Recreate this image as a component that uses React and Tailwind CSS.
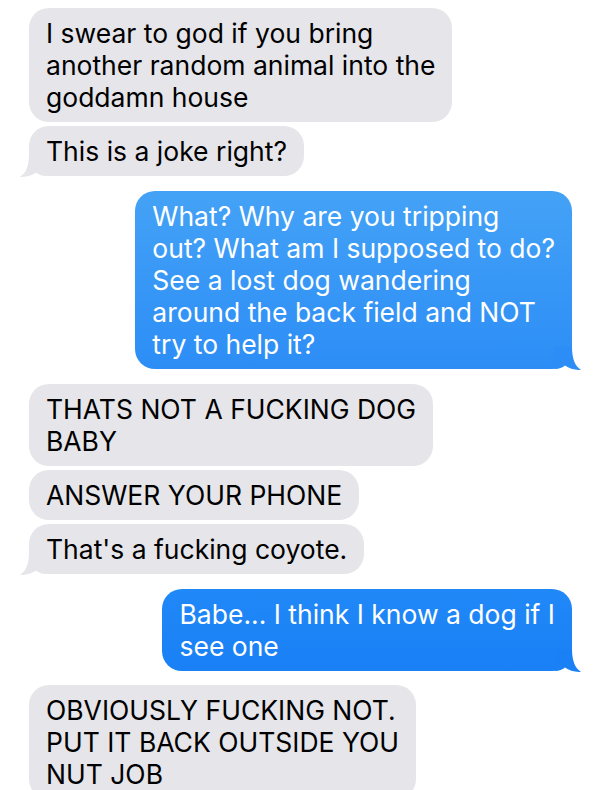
import React from "react";

const GRAY = "#e5e5ea";

function Tail({ side, color }) {
  const pos =
    side === "left"
      ? "left-[-9px] bottom-[-1px]"
      : "right-[-9px] bottom-[-1px] -scale-x-100";
  return (
    <svg
      className={`absolute ${pos}`}
      width="26"
      height="24"
      viewBox="0 0 26 24"
    >
      <path
        d="M9 1 C9 13 6 20 0 24 C6 24.2 12 22.5 16 19.5 C18.5 21.5 22 23 26 23 L26 1 Z"
        fill={color}
      />
    </svg>
  );
}

function Bubble({ side, lines, tail, className = "", tailColor }) {
  const left = side === "left";
  return (
    <div
      className={`relative w-fit rounded-[20px] px-[17px] py-[9px] text-[26.5px] leading-[32px] ${
        left ? "self-start ml-[29px] text-black bg-[#e5e5ea]" : "self-end mr-[28px] text-white"
      } ${className}`}
    >
      {tail && <Tail side={side} color={tailColor || GRAY} />}
      <div className="relative whitespace-nowrap">
        {lines.map((l, i) => (
          <React.Fragment key={i}>
            {l}
            {i < lines.length - 1 && <br />}
          </React.Fragment>
        ))}
      </div>
    </div>
  );
}

export default function App() {
  return (
    <div
      className="w-[600px] h-[790px] overflow-hidden bg-white flex flex-col pt-[8px]"
      style={{ fontFamily: 'Inter, "Liberation Sans", Arial, sans-serif' }}
    >
      <Bubble
        side="left"
        lines={["I swear to god if you bring", "another random animal into the", "goddamn house"]}
      />
      <Bubble side="left" tail className="mt-[4px]" lines={["This is a joke right?"]} />

      <Bubble
        side="right"
        tail
        tailColor="#2c8df6"
        className="mt-[15px] bg-gradient-to-b from-[#44a2f6] to-[#2c8df6]"
        lines={[
          "What? Why are you tripping",
          "out? What am I supposed to do?",
          "See a lost dog wandering",
          "around the back field and NOT",
          "try to help it?",
        ]}
      />

      <Bubble side="left" className="mt-[15px]" lines={["THATS NOT A FUCKING DOG", "BABY"]} />
      <Bubble side="left" className="mt-[4px]" lines={["ANSWER YOUR PHONE"]} />
      <Bubble side="left" tail className="mt-[4px]" lines={["That's a fucking coyote."]} />

      <Bubble
        side="right"
        tail
        tailColor="#1a80f6"
        className="mt-[15px] bg-gradient-to-b from-[#2088f7] to-[#1a80f6]"
        lines={["Babe... I think I know a dog if I", "see one"]}
      />

      <Bubble
        side="left"
        className="mt-[14px]"
        lines={["OBVIOUSLY FUCKING NOT.", "PUT IT BACK OUTSIDE YOU", "NUT JOB"]}
      />
    </div>
  );
}
